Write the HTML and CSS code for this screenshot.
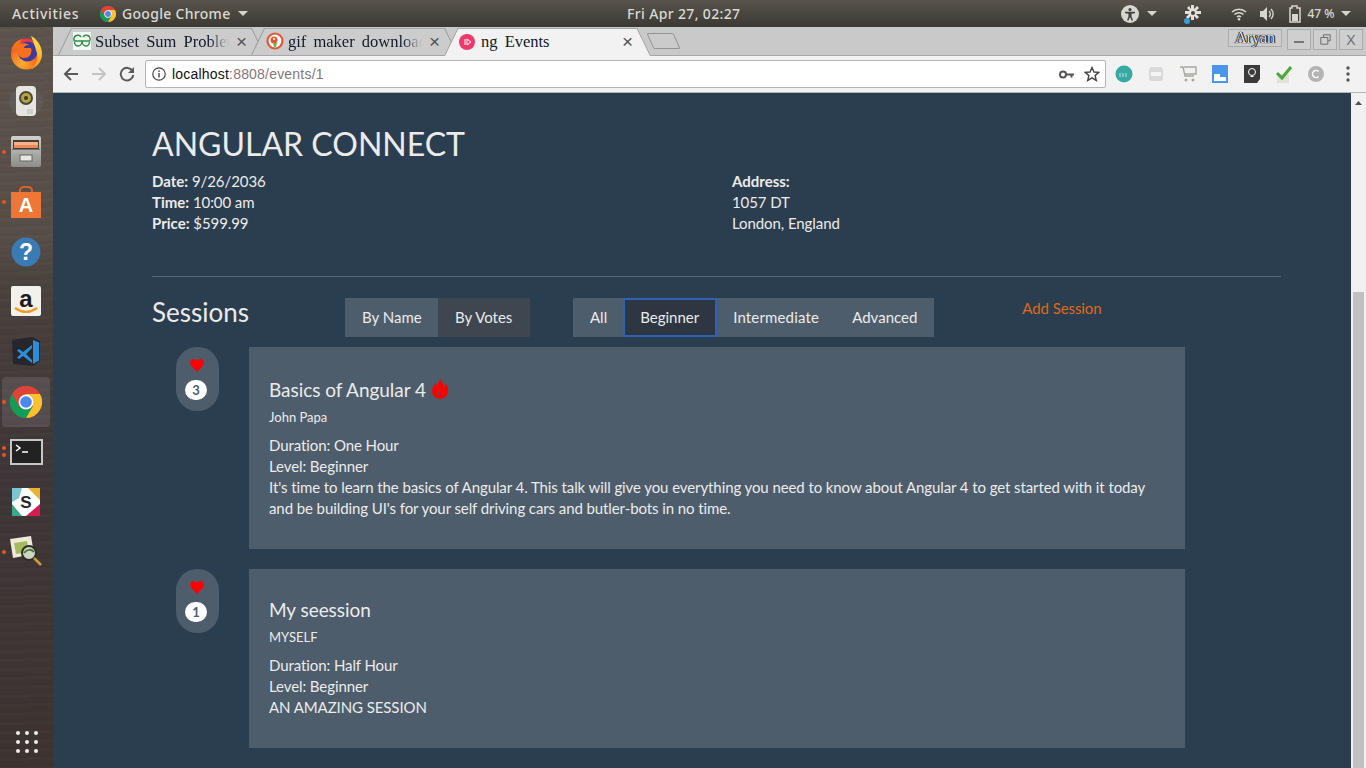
FILE: index.html
```html
<!DOCTYPE html>
<html lang="en">
<head>
<meta charset="utf-8">
<title>ng Events</title>
<link rel="stylesheet" href="styles.css">
</head>
<body>
<svg class="defs" width="0" height="0" aria-hidden="true">
  <defs>
    <radialGradient id="ffg" cx=".35" cy=".8" r=".9"><stop offset="0" stop-color="#ffb02e"/><stop offset=".55" stop-color="#f5651f"/><stop offset="1" stop-color="#e2245c"/></radialGradient>
    <linearGradient id="tail" x1="0" y1="0" x2="0" y2="1"><stop offset="0" stop-color="#ffe14a"/><stop offset="1" stop-color="#ff9a1f"/></linearGradient>
    <linearGradient id="cab" x1="0" y1="0" x2="0" y2="1"><stop offset="0" stop-color="#d0d0cc"/><stop offset="1" stop-color="#8c8c88"/></linearGradient>
  </defs>
  <symbol id="chrome" viewBox="0 0 32 32">
    <circle cx="16" cy="16" r="16" fill="#db4437"/>
    <path d="M16 16 2.100 24A16 16 0 0 0 16 32l7-12z" fill="#0f9d58"/>
    <path d="M16 8h13.900A16 16 0 0 1 16 32l7-12z" fill="#fbc02d"/>
    <path d="M2.100 24A16 16 0 0 1 2.100 8L9 20z" fill="#0f9d58"/>
    <path d="M2.100 8A16 16 0 0 1 29.900 8H16a8 8 0 0 0-7 12z" fill="#db4437"/>
    <circle cx="16" cy="16" r="7.400" fill="#fff"/>
    <circle cx="16" cy="16" r="5.800" fill="#4a88ee"/>
  </symbol>
</svg>
<div class="screen">
  <header class="topbar">
    <span class="activities">Activities</span>
    <svg class="app-icon" width="16" height="16"><use href="#chrome"/></svg>
    <span class="app-name">Google Chrome</span>
    <i class="caret app-caret"></i>
    <span class="clock">Fri Apr 27, 02:27</span>
    <div class="tray">
      <svg class="tray-access" width="18" height="18" viewBox="0 0 18 18"><circle cx="9" cy="9" r="9" fill="#d8d6d0"/><circle cx="9" cy="4.600" r="1.600" fill="#444"/><path d="M4 6.800h10v1.400l-3.400.6v2.600l1.400 4h-1.500L9 12l-1.500 3.400H6l1.400-4V8.800L4 8.200z" fill="#444"/></svg>
      <i class="caret tray-caret1"></i>
      <svg class="tray-gear" width="20" height="22" viewBox="0 0 20 22"><path d="M8 2h3v4l3-3 2 2-3 3h5v3h-5l3 3-2 2-3-3v4H8v-4l-3 3-2-2 3-3H2V8h5L4 5l2-2 2 3z" fill="#e4e2dc"/><circle cx="10" cy="10" r="2" fill="#444"/><circle cx="4" cy="18" r="3" fill="#35a0d8"/></svg>
      <svg class="tray-wifi" width="16" height="14" viewBox="0 0 16 14"><path d="M1 5a10 10 0 0 1 14 0M3.500 7.500a6.500 6.500 0 0 1 9 0M6 10a3 3 0 0 1 4 0" fill="none" stroke="#d8d6d0" stroke-width="1.500"/><circle cx="8" cy="12.300" r="1.300" fill="#d8d6d0"/></svg>
      <svg class="tray-vol" width="16" height="16" viewBox="0 0 16 16"><path d="M1 5h3l4-4v14l-4-4H1z" fill="#d8d6d0"/><path d="M10 5a4 4 0 0 1 0 6M12 3a7 7 0 0 1 0 10" fill="none" stroke="#d8d6d0" stroke-width="1.400"/></svg>
      <svg class="tray-batt" width="14" height="18" viewBox="0 0 14 18"><path d="M4 1h5v2h3v14H2V3h2z" fill="none" stroke="#d8d6d0" stroke-width="1.500"/><path d="M4 9h6v7H4z" fill="#d8d6d0"/></svg>
      <span class="tray-pct">47 %</span>
      <i class="caret tray-caret2"></i>
    </div>
  </header>

  <div class="desk">
    <nav class="dock">
      <div class="dock-item">
        <svg width="33" height="35" viewBox="0 0 33 35"><circle cx="16.500" cy="19" r="15.500" fill="url(#ffg)"/><circle cx="17.500" cy="16.500" r="10" fill="#3d3a9e"/><path d="M1.500 15C3 8 8 5 12 4c-2 2-2 4-2 5 3-1 7-1 9 1-3 0-5 1-5 3h7c2 5-2 11-8 10-4-1-7-4-6-10-2 1-3 1-5.500 2z" fill="#f7701f"/><path d="M21 1c6 3 11 10 11 18 0 7-5 13-11 15 6-4 8-12 5-19-1-4-3-9-5-14z" fill="url(#tail)"/></svg>
      </div>
      <div class="dock-item">
        <svg width="36" height="34" viewBox="0 0 36 34"><ellipse cx="18" cy="17" rx="17" ry="14" fill="#6f6f7a" opacity=".28"/><rect x="8" y="1" width="20" height="30" rx="4" fill="#e6e5df"/><circle cx="18" cy="13" r="7" fill="#4a4836"/><circle cx="18" cy="13" r="5" fill="#b5a440"/><circle cx="18" cy="13" r="2" fill="#3b3a33"/><rect x="19" y="24" width="6" height="5" fill="#cfcfc9"/></svg>
      </div>
      <div class="dock-item dock-running">
        <svg width="32" height="32" viewBox="0 0 32 32"><rect x="1" y="0" width="30" height="31" rx="2" fill="url(#cab)"/><rect x="3" y="4" width="26" height="9" fill="#4b3d34"/><rect x="4" y="6" width="24" height="3" fill="#f3b28c"/><rect x="4" y="9" width="24" height="3" fill="#e98a58"/><rect x="2" y="13" width="28" height="1" fill="#6e6e6a"/><rect x="10" y="19" width="12" height="6" fill="#e6e6e2" stroke="#66665f"/></svg>
      </div>
      <div class="dock-item dock-running">
        <svg width="32" height="32" viewBox="0 0 32 32"><path d="M10 8V4a4 4 0 0 1 4-3h4a4 4 0 0 1 4 3v4" fill="none" stroke="#d8622a" stroke-width="2"/><path d="M1 6h30v26H1z" fill="#ee7636"/><text x="16" y="26" class="store-a">A</text></svg>
      </div>
      <div class="dock-item">
        <svg width="30" height="30" viewBox="0 0 30 30"><circle cx="15" cy="15" r="14.500" fill="#3a7ab5"/><text x="15" y="23" class="help-q">?</text></svg>
      </div>
      <div class="dock-item">
        <svg width="30" height="32" viewBox="0 0 30 32"><rect width="30" height="30" rx="2" fill="#f3f1ec"/><text x="15" y="21" class="amz-a">a</text><path d="M4 22c7 5 15 5 22 0" fill="none" stroke="#f39a1f" stroke-width="2.200"/></svg>
      </div>
      <div class="dock-item">
        <svg width="30" height="32" viewBox="0 0 30 32"><path d="M1 4 21 1l8 4v20l-7 5-20-2z" fill="#26262c"/><path d="M22 4l6 2.500v18L22 28z" fill="#2a8fd8"/><path d="M21 9 12 16l-4-3-2 1.500 4 3.500-4 3.500L8 23l4-3 9 7v-3l-6-6 6-6z" fill="#2a8fd8"/></svg>
      </div>
      <div class="dock-item dock-running dock-active">
        <svg width="32" height="32"><use href="#chrome"/></svg>
      </div>
      <div class="dock-item dock-running dock-double">
        <svg width="33" height="26" viewBox="0 0 33 26"><rect x="1" y="1" width="31" height="24" fill="#222" stroke="#c6c6c2" stroke-width="2"/><path d="M6 6l4 3-4 3" fill="none" stroke="#fff" stroke-width="1.500"/><path d="M12 13h6" stroke="#fff" stroke-width="1.500"/></svg>
      </div>
      <div class="dock-item">
        <svg width="28" height="28" viewBox="0 0 28 28"><rect width="28" height="28" rx="2" fill="#fff"/><path d="M0 0h10L7 10 0 14z" fill="#7cc6cf"/><path d="M16 0h12v12z" fill="#ecb32e"/><path d="M28 16v12H14z" fill="#d71a54"/><path d="M0 16v12h10z" fill="#3aa98a"/><text x="14" y="20" class="slack-s">S</text></svg>
      </div>
      <div class="dock-item dock-running">
        <svg width="34" height="32" viewBox="0 0 34 32"><path d="M1 3 22 0l3 18-21 4z" fill="#eee9d8"/><path d="M5 7l13-2 2 11-13 2z" fill="#a8bb5c"/><circle cx="20" cy="17" r="7" fill="#cfd8c0" stroke="#2f2f2a" stroke-width="2"/><path d="M15 17c3-4 7-4 10-1" stroke="#4d7a3a" stroke-width="2" fill="none"/><path d="M25 22l7 7" stroke="#d09a3a" stroke-width="2.500"/></svg>
      </div>
      <div class="dock-grid">
        <i></i><i></i><i></i><i></i><i></i><i></i><i></i><i></i><i></i>
      </div>
    </nav>

    <div class="browser">
      <div class="tabstrip">
        <div class="tab">
          <svg class="fav" width="18" height="18" viewBox="0 0 18 18"><rect width="18" height="18" fill="#f4f8f4"/><path d="M9 9H1.500a3.800 3.800 0 0 1 6.500-4M9 9h7.500a3.800 3.800 0 0 0-6.500-4M9 9c0 3-2 5-4 5S1.500 12 1.500 10M9 9c0 3 2 5 4 5s3.500-2 3.500-4" fill="none" stroke="#2f8d46" stroke-width="1.500"/></svg>
          <span class="tab-title tab-fade">Subset Sum Problem</span>
          <span class="tab-x">×</span>
        </div>
        <div class="tab">
          <svg class="fav" width="18" height="18" viewBox="0 0 18 18"><circle cx="9" cy="9" r="8.600" fill="#de5833"/><circle cx="9" cy="9" r="6.400" fill="#fff"/><circle cx="8" cy="8" r="3.500" fill="#de5833"/><path d="M7 11h4l-1 4H8z" fill="#65bc46"/><circle cx="8" cy="7" r="1.100" fill="#fff"/></svg>
          <span class="tab-title tab-fade">gif maker download</span>
          <span class="tab-x">×</span>
        </div>
        <div class="tab tab-on">
          <svg class="fav" width="16" height="16" viewBox="0 0 16 16"><circle cx="8" cy="8" r="8" fill="#f0386b"/><path d="M6 5v6M8 5l4 3-4 3z" fill="none" stroke="#fff" stroke-width="1"/></svg>
          <span class="tab-title">ng Events</span>
          <span class="tab-x">×</span>
        </div>
        <div class="newtab"></div>
        <div class="winctl">
          <span class="win-user">Aryan</span>
          <span class="win-btn"><i class="win-min"></i></span>
          <span class="win-btn"><svg width="11" height="11" viewBox="0 0 11 11"><path d="M3.500 3V.8h6.700v6H8M.8 3.500h7v6.700h-7z" fill="none" stroke="#6e6e6e"/></svg></span>
          <span class="win-btn">X</span>
        </div>
      </div>

      <div class="toolbar">
        <svg class="tb-back" width="16" height="16" viewBox="0 0 16 16"><path d="M15 8H2M8 2 2 8l6 6" fill="none" stroke="#5a5a5a" stroke-width="2"/></svg>
        <svg class="tb-fwd" width="16" height="16" viewBox="0 0 16 16"><path d="M1 8h13M8 2l6 6-6 6" fill="none" stroke="#c4c4c4" stroke-width="2"/></svg>
        <svg class="tb-reload" width="16" height="16" viewBox="0 0 16 16"><path d="M13.500 5A6.300 6.300 0 1 0 14.300 9" fill="none" stroke="#5a5a5a" stroke-width="2"/><path d="M15 1v6H9z" fill="#5a5a5a"/></svg>
        <div class="omnibox">
          <svg width="14" height="14" viewBox="0 0 14 14"><circle cx="7" cy="7" r="6.200" fill="none" stroke="#444" stroke-width="1.200"/><path d="M7 6v4.500M7 3.500v1.400" stroke="#444" stroke-width="1.400"/></svg>
          <span class="url"><b>localhost</b>:8808/events/1</span>
          <svg class="omni-key" width="15" height="9" viewBox="0 0 15 9"><circle cx="4" cy="4.500" r="3" fill="none" stroke="#555" stroke-width="2"/><path d="M7 3.500h8v2h-1.500v2h-2v-2H7z" fill="#555"/></svg>
          <svg class="omni-star" width="16" height="16" viewBox="0 0 16 16"><path d="M8 1.500 10 6l4.800.4-3.700 3.200 1.200 4.800L8 11.800l-4.300 2.600 1.200-4.800L1.200 6.400 6 6z" fill="none" stroke="#444" stroke-width="1.400"/></svg>
        </div>
        <div class="extensions">
          <svg width="18" height="18" viewBox="0 0 18 18"><circle cx="9" cy="9" r="8.500" fill="#37a8a2"/><path d="M5 12V8M8 12V8M11 12V8" stroke="#bfe6e4"/></svg>
          <svg width="18" height="18" viewBox="0 0 18 18"><rect x="2" y="2" width="14" height="14" rx="3" fill="#d9d9d9"/><rect x="4" y="7" width="10" height="4" fill="#f4f4f4"/></svg>
          <svg width="18" height="18" viewBox="0 0 18 18"><path d="M1 2h3l2 9h9M5 2h12v7H6" fill="none" stroke="#a8a8a0" stroke-width="1.400"/><circle cx="7" cy="15" r="1.500" fill="#a8a8a0"/><circle cx="14" cy="15" r="1.500" fill="#a8a8a0"/></svg>
          <svg width="16" height="18" viewBox="0 0 16 18"><rect width="16" height="18" fill="#4b96ea"/><path d="M2 9h6v3h6v4H2z" fill="#fff"/></svg>
          <svg width="16" height="18" viewBox="0 0 16 18"><path d="M0 0h16v14l-3 4H0z" fill="#3a3a3a"/><circle cx="8" cy="7" r="3.500" fill="none" stroke="#fff"/><path d="M6.500 11.500h3" stroke="#fff"/></svg>
          <svg width="18" height="18" viewBox="0 0 18 18"><rect x="2" y="9" width="12" height="9" fill="#e2e2d6"/><path d="M2 8l5 5 9-11" fill="none" stroke="#4aa83a" stroke-width="3"/></svg>
          <svg width="18" height="18" viewBox="0 0 18 18"><circle cx="9" cy="9" r="8" fill="#b4b4b4"/><path d="M11.500 6.500a3.500 3.500 0 1 0 0 5" fill="none" stroke="#fff" stroke-width="1.500"/></svg>
          <svg width="18" height="18" viewBox="0 0 18 18"><circle cx="9" cy="3" r="1.700" fill="#555"/><circle cx="9" cy="9" r="1.700" fill="#555"/><circle cx="9" cy="15" r="1.700" fill="#555"/></svg>
        </div>
      </div>

      <div class="viewport">
        <main class="page">
          <h2 class="event-name">ANGULAR CONNECT</h2>
          <div class="event-info">
            <div>
              <div><strong>Date:</strong> 9/26/2036</div>
              <div><strong>Time:</strong> 10:00 am</div>
              <div><strong>Price:</strong> $599.99</div>
            </div>
            <div>
              <div><strong>Address:</strong></div>
              <div>1057 DT</div>
              <div>London, England</div>
            </div>
          </div>
          <hr class="rule">
          <div class="session-bar">
            <h3 class="sessions-title">Sessions</h3>
            <div class="btn-group">
              <span class="btn btn-name">By Name</span>
              <span class="btn btn-dim">By Votes</span>
            </div>
            <div class="btn-group group-filter">
              <span class="btn btn-all">All</span>
              <span class="btn btn-on">Beginner</span>
              <span class="btn btn-mid">Intermediate</span>
              <span class="btn">Advanced</span>
            </div>
            <a class="add-link">Add Session</a>
          </div>

          <section class="session">
            <div class="vote">
              <svg class="heart" width="14" height="13" viewBox="0 0 14 13"><path d="M7 13 1 6.500C-1 4 .5 0 3.500 0 5 0 6.300 1 7 2.200 7.700 1 9 0 10.500 0c3 0 4.500 4 2.500 6.500z" fill="#f00"/></svg>
              <span class="badge">3</span>
            </div>
            <article class="card card-first">
              <h4 class="card-title">Basics of Angular 4
                <svg class="flame" width="16" height="20" viewBox="0 0 16 20"><path fill-rule="evenodd" stroke="#f00" stroke-width=".6" d="M8.500 .5C9.500 3.500 12 5.500 12.500 9 13.700 8 14 6.500 13.500 4.500 15.500 7 16 10 15.500 13 15 17 12 19.500 8 19.500 4 19.500 1 17 .5 13 0 9.500 2 6.500 4 4 4 6 4.300 7.500 5.200 8.500 5.500 5.500 7.500 3.500 8.500 .5ZM7 17.500C5.500 16.500 5 15 5.500 13.500 6 12 7.500 11 8 9.500 8.500 12 7.200 13.500 7 15 6.900 16 7.200 16.800 7 17.500ZM10.500 17.500C12 16.500 12.500 14.500 11.500 12.500 11.200 14.500 10.500 15.500 10.500 17.500Z" fill="#f00"/></svg>
              </h4>
              <div class="presenter">John Papa</div>
              <div class="line">Duration: One Hour</div>
              <div class="line">Level: Beginner</div>
              <p class="line">It's time to learn the basics of Angular 4. This talk will give you everything you need to know about Angular 4 to get started with it today and be building UI's for your self driving cars and butler-bots in no time.</p>
            </article>
          </section>

          <section class="session">
            <div class="vote">
              <svg class="heart" width="14" height="13" viewBox="0 0 14 13"><path d="M7 13 1 6.500C-1 4 .5 0 3.500 0 5 0 6.300 1 7 2.200 7.700 1 9 0 10.500 0c3 0 4.500 4 2.500 6.500z" fill="#f00"/></svg>
              <span class="badge">1</span>
            </div>
            <article class="card">
              <h4 class="card-title">My seession</h4>
              <div class="presenter">MYSELF</div>
              <div class="line">Duration: Half Hour</div>
              <div class="line">Level: Beginner</div>
              <p class="line">AN AMAZING SESSION</p>
            </article>
          </section>
        </main>
        <div class="scrollbar">
          <svg class="scroll-up" width="15" height="14" viewBox="0 0 15 14"><path d="M4 10 7.500 6l3.500 4z" fill="#505050"/></svg>
          <div class="thumb"></div>
        </div>
      </div>
    </div>
  </div>
</div>
</body>
</html>
```
FILE: styles.css
```css
* { box-sizing: border-box; }
html, body { margin: 0; height: 100%; overflow: hidden; }
body { font-family: "Lato", "Liberation Sans", sans-serif; font-size: 15px; line-height: 21px; color: #ebebeb; background: #2b3e50; }
.defs { display: block; height: 0; }
.screen { display: flex; flex-direction: column; width: 1366px; height: 768px; }

/* Top bar */
.topbar { flex: 0 0 27px; display: flex; align-items: center; background: linear-gradient(#59544b, #3b3934); color: #dbd9d3; font-family: "Noto Sans", sans-serif; font-size: 14px; font-weight: 500; white-space: nowrap; }
.activities { margin-left: 12px; width: 88px; letter-spacing: .7px; }
.app-icon { flex: none; }
.app-name { margin-left: 6px; width: 116px; letter-spacing: .3px; }
.caret { display: block; width: 0; height: 0; border-left: 5px solid transparent; border-right: 5px solid transparent; border-top: 5px solid #d6d4ce; }
.clock { margin-left: 379px; letter-spacing: .35px; font-size: 14px; }
.tray { display: flex; align-items: center; margin-left: 381px; }
.tray-caret1 { margin-left: 8px; }
.tray-gear { margin-left: 26px; }
.tray-wifi { margin-left: 28px; }
.tray-vol { margin-left: 12px; }
.tray-batt { margin-left: 13px; }
.tray-pct { margin-left: 5px; font-size: 12px; }
.tray-caret2 { margin-left: 6px; }

/* Dock */
.desk { flex: 1; display: flex; min-height: 0; }
.dock { flex: 0 0 53px; display: flex; flex-direction: column; background: repeating-linear-gradient(178deg, rgba(0, 0, 0, .035) 0 2px, rgba(255, 255, 255, .012) 2px 5px, rgba(0, 0, 0, .015) 5px 9px), linear-gradient(#5d554d 0, #564e47 210px, #4a423d 260px, #40373a 420px, #3d3431 100%); }
.dock-item { position: relative; flex: 0 0 50px; display: flex; align-items: center; justify-content: center; margin: 0 3px 0 2px; border-radius: 4px; }
.dock-active { background: rgba(255, 255, 255, .1); }
.dock-running::before { content: ""; position: absolute; left: 0; top: 50%; width: 4px; height: 4px; margin-top: -2px; border-radius: 50%; background: #e95420; }
.dock-double::before { margin-top: -6px; box-shadow: 0 7px 0 #e95420; }
.store-a { font: 700 20px "Liberation Sans", sans-serif; fill: #fff; text-anchor: middle; }
.help-q { font: 700 23px "Liberation Sans", sans-serif; fill: #fff; text-anchor: middle; }
.amz-a { font: 700 24px "Liberation Sans", sans-serif; fill: #1c1c1c; text-anchor: middle; }
.slack-s { font: 700 17px "Liberation Sans", sans-serif; fill: #26262c; text-anchor: middle; }
.dock-grid { margin: auto 0 15px 16px; width: 22px; display: grid; grid-template-columns: repeat(3, 4px); gap: 5px; }
.dock-grid i { display: block; width: 4px; height: 4px; border-radius: 50%; background: #eeeeea; }

/* Browser chrome */
.browser { flex: 1; display: flex; flex-direction: column; min-width: 0; }
.tabstrip { flex: 0 0 29px; min-height: 0; display: flex; padding-left: 5px; background: #c9c9c9; border-bottom: 1px solid #a6a6a6; font-family: "Liberation Serif", serif; font-size: 16.500px; color: #111a2a; }
.tab { position: relative; z-index: 1; flex: 0 0 207px; height: 28px; margin-right: -14px; display: flex; align-items: center; padding-left: 15px; word-spacing: 3px; }
.tab::before, .tab::after { content: ""; position: absolute; z-index: -1; top: 1px; bottom: 0; width: 55%; background: #cccccc; border-top: 1px solid #a6a6a6; }
.tab::before { left: 0; transform: skewX(-26deg); transform-origin: bottom left; border-left: 1px solid #9a9a9a; }
.tab::after { right: 0; transform: skewX(26deg); transform-origin: bottom right; border-right: 1px solid #9a9a9a; }
.tab-on { z-index: 2; height: 29px; }
.tab-on::before, .tab-on::after { background: #f2f2f2; }
.fav { flex: none; margin-right: 4px; }
.tab-title { width: 134px; overflow: hidden; white-space: nowrap; }
.tab-on .fav { margin-right: 6px; }
.tab-fade { -webkit-mask-image: linear-gradient(90deg, #000 85%, transparent); mask-image: linear-gradient(90deg, #000 85%, transparent); }
.tab-x { font-family: "Liberation Sans", sans-serif; font-size: 19px; color: #555; margin-left: 7px; }
.newtab { flex: none; width: 27px; height: 16px; margin: 6px 0 0 13px; background: #cbcbcb; border: 1px solid #939393; border-radius: 2px; transform: skewX(24deg); }
.winctl { display: flex; align-items: flex-start; margin-left: auto; padding: 2px 3px 0 0; }
.win-user { width: 54px; height: 18px; margin-right: 3px; background: #cdcdcd; border: 1px solid #ababab; text-align: center; font-size: 16px; line-height: 16px; color: #e8e8e8; text-shadow: 0 0 1px #000, 0 0 1px #000, 1px 0 0 #222, -1px 0 0 #555; }
.win-btn { display: flex; align-items: center; justify-content: center; width: 24px; height: 21px; margin-left: 2px; background: #cfcfcf; border: 1px solid #ababab; font: 14px "Liberation Sans", sans-serif; color: #6e6e6e; }
.win-min { display: block; width: 10px; height: 2px; margin-top: 5px; background: #777; }
.toolbar { flex: 0 0 37px; display: flex; align-items: center; padding-left: 10px; background: #f2f2f2; border-bottom: 1px solid #b4b4b4; }
.tb-fwd, .tb-reload { margin-left: 12px; }
.omnibox { display: flex; align-items: center; width: 961px; height: 28px; margin-left: 10px; padding: 0 5px 0 6px; background: #fff; border: 1px solid #b5b5b5; border-radius: 2px; }
.url { margin-left: 6px; font-family: "Liberation Sans", sans-serif; font-size: 14px; color: #84767a; letter-spacing: .2px; }
.url b { font-weight: 400; color: #111; }
.omni-key { margin-left: auto; }
.omni-star { margin-left: 10px; }
.extensions { display: grid; grid-template-columns: repeat(8, 32px); justify-items: center; align-items: center; margin-left: 2px; }

/* Page */
.viewport { flex: 1; display: flex; min-height: 0; }
.page { flex: 1; padding: 33px 70px 0 99px; overflow: hidden; background: #2b3e50; }
.event-name { margin: 0; font-size: 32px; font-weight: 400; line-height: 36px; }
.event-info { display: grid; grid-template-columns: 580px 1fr; margin-top: 9px; letter-spacing: -.08px; }
strong { font-weight: 700; letter-spacing: 0; }
.rule { margin: 42px 0 21px; border: 0; border-top: 1px solid #596a7b; }
.session-bar { display: flex; align-items: flex-start; height: 49px; }
.sessions-title { flex: 0 0 193px; margin: -1px 0 0; font-size: 26px; font-weight: 400; line-height: 30px; }
.btn-group { display: flex; flex: none; height: 39px; background: #4e5d6c; }
.group-filter { margin-left: 43px; }
.btn { display: flex; align-items: center; padding: 0 17px; height: 39px; white-space: nowrap; }
.btn-name { flex: 0 0 93px; padding-right: 0; }
.btn-dim { flex: 0 0 92px; padding-right: 0; background: #3e4650; }
.btn-all { padding: 0 16px 0 17px; flex: 0 0 50px; }
.btn-on { flex: 0 0 94px; background: #2d3641; border: 2px solid #2f62b5; border-radius: 2px; padding: 0 0 0 15px; }
.btn-mid { flex: 0 0 118px; padding: 0 0 0 16px; letter-spacing: .15px; }
.add-link { margin: 0 0 0 88px; color: #df691a; letter-spacing: -.08px; }
.session { display: flex; gap: 30px; align-items: flex-start; margin: 0 0 20px 24px; }
.vote { flex: 0 0 43px; height: 64px; padding-top: 12px; display: flex; flex-direction: column; align-items: center; gap: 8px; background: #4e5d6c; border-radius: 21px; }
.heart { margin-right: 1px; }
.badge { display: block; width: 22px; height: 20px; margin-right: 3px; border-radius: 10px; background: #fff; color: #4e5d6c; font-size: 13px; font-weight: 700; line-height: 20px; text-align: center; }
.card { flex: 0 0 936px; padding: 30px 20px 30px; background: #4e5d6c; }
.card-first { padding-top: 32px; }
.card-title { height: 21px; margin: 0; font-size: 19px; font-weight: 400; line-height: 21px; letter-spacing: -.05px; }
.flame { margin-left: 1px; vertical-align: -2px; }
.presenter { margin: 7px 0 8px; font-size: 13px; line-height: 20px; }
.line { margin: 0; letter-spacing: -.09px; }

/* Scrollbar */
.scrollbar { flex: 0 0 15px; display: flex; flex-direction: column; background: #f1f1f1; }
.scroll-up { flex: none; margin-top: 2px; }
.thumb { flex: 1; margin: 183px 2px 0; background: #c1c1c1; }
```
